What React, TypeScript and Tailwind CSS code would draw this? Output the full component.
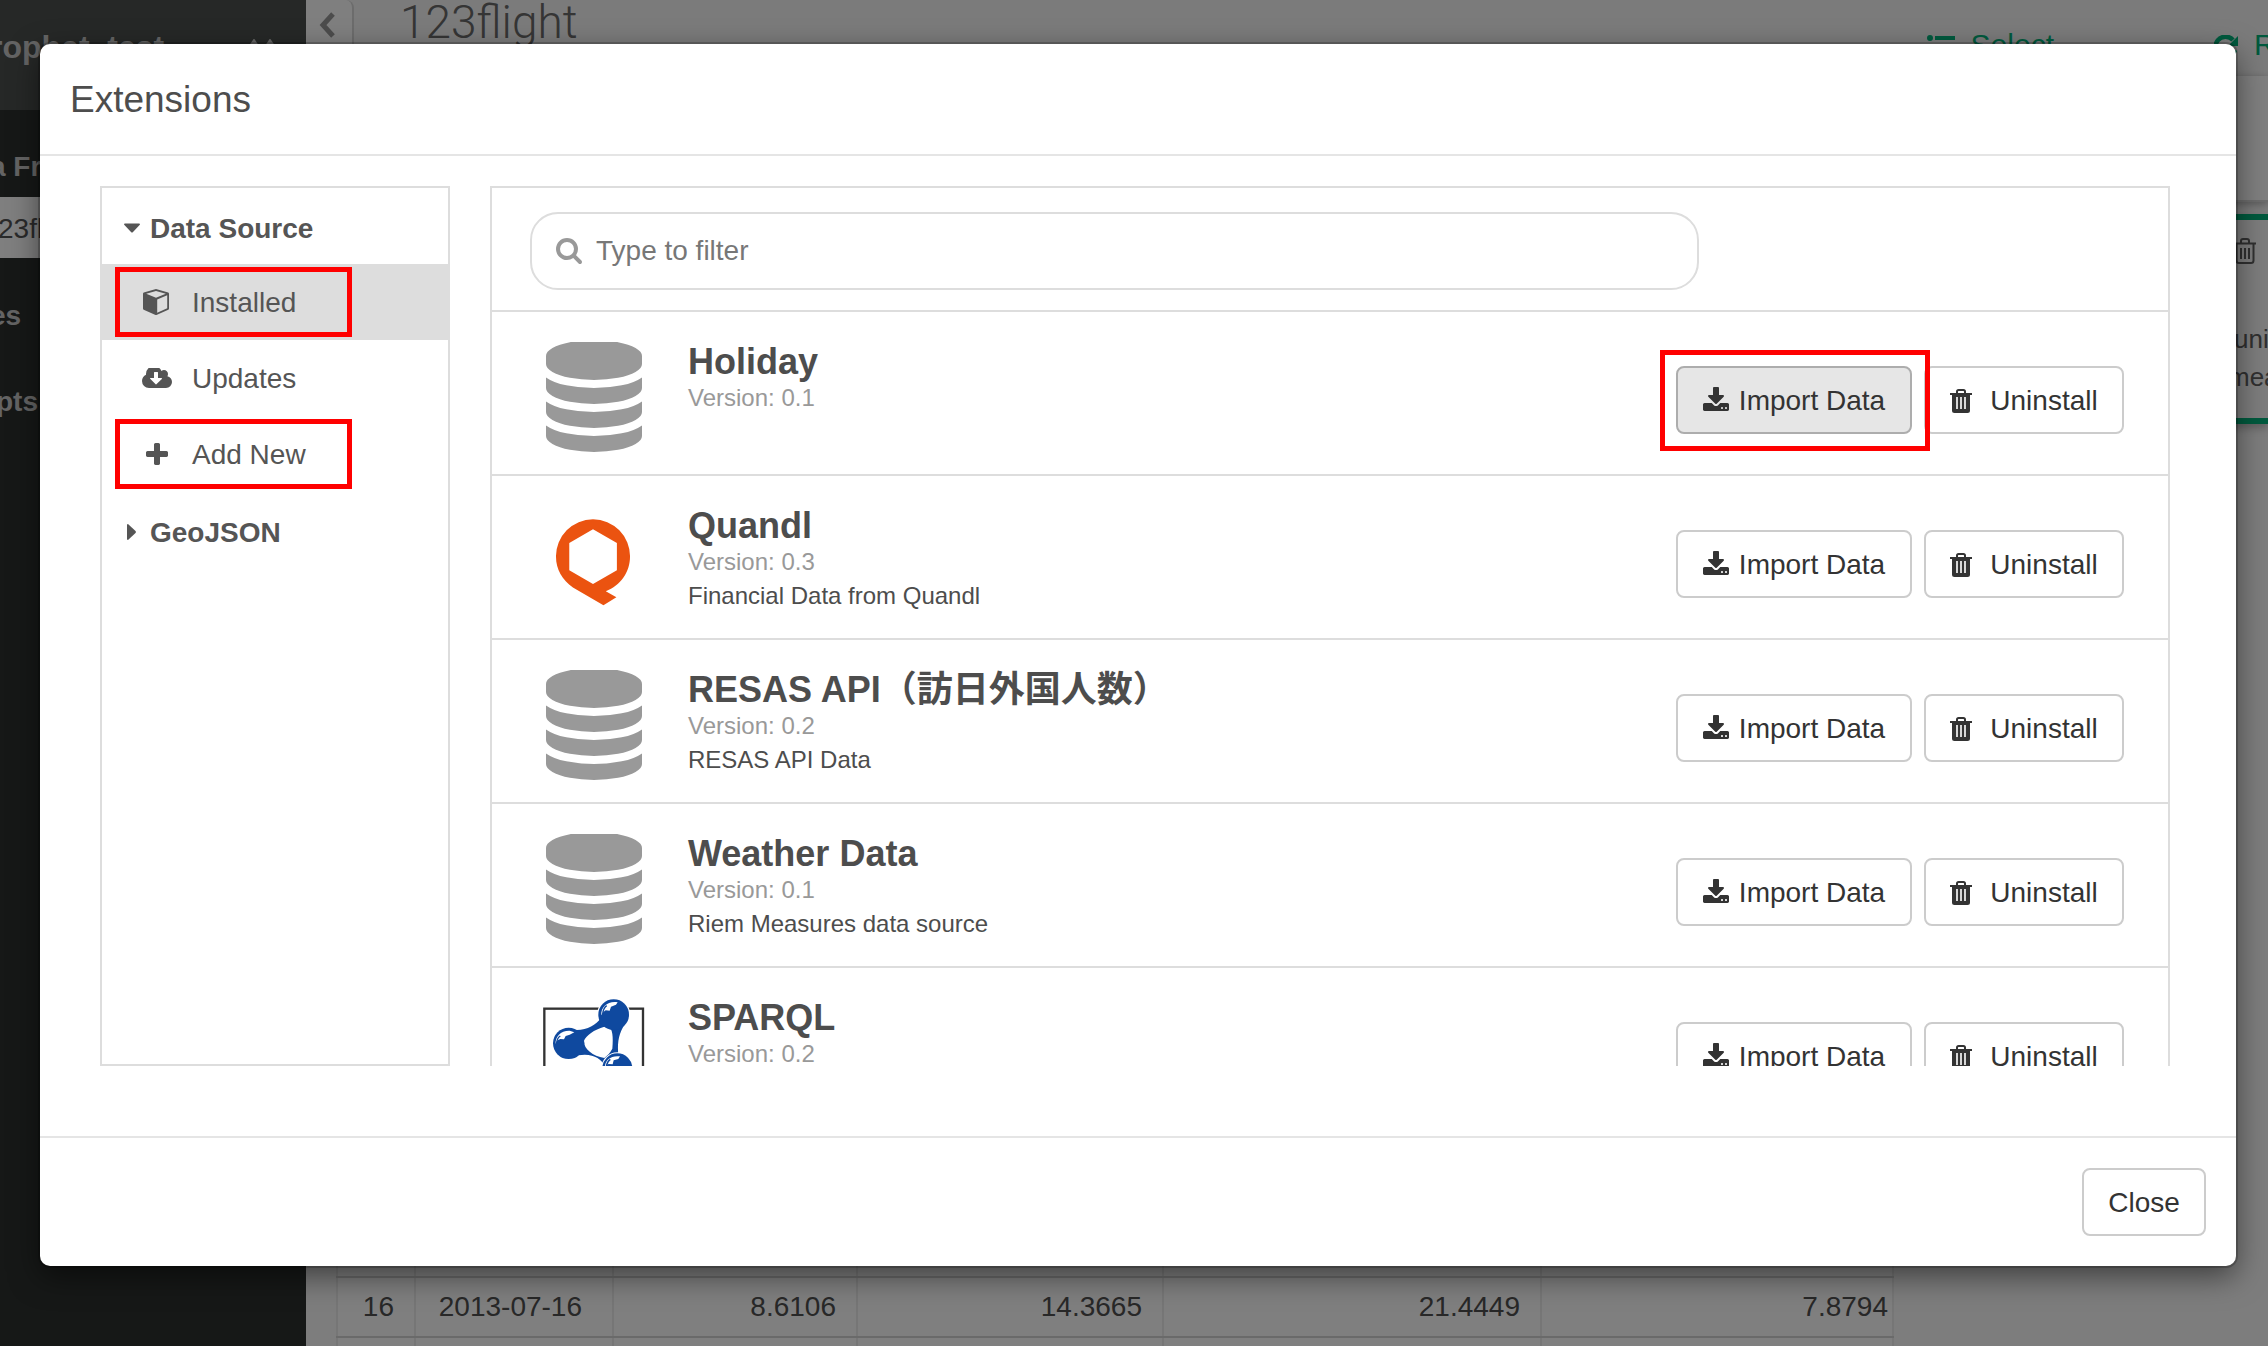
import React from "react";

const FA = {
  download:
    "M1344 1344q0-26-19-45t-45-19-45 19-19 45 19 45 45 19 45-19 19-45zm256 0q0-26-19-45t-45-19-45 19-19 45 19 45 45 19 45-19 19-45zm128-224v320q0 40-28 68t-68 28h-1472q-40 0-68-28t-28-68v-320q0-40 28-68t68-28h465l135 136q58 56 136 56t136-56l136-136h464q40 0 68 28t28 68zm-325-569q17 41-14 70l-448 448q-18 19-45 19t-45-19l-448-448q-31-29-14-70 17-39 59-39h256v-448q0-26 19-45t45-19h256q26 0 45 19t19 45v448h256q42 0 59 39z",
  database:
    "M896 768q237 0 443-43t325-127v170q0 69-103 128t-280 93.5-385 34.5-385-34.5-280-93.5-103-128v-170q119 84 325 127t443 43zm0 768q237 0 443-43t325-127v170q0 69-103 128t-280 93.5-385 34.5-385-34.5-280-93.5-103-128v-170q119 84 325 127t443 43zm0-384q237 0 443-43t325-127v170q0 69-103 128t-280 93.5-385 34.5-385-34.5-280-93.5-103-128v-170q119 84 325 127t443 43zm0-1152q208 0 385 34.5t280 93.5 103 128v128q0 69-103 128t-280 93.5-385 34.5-385-34.5-280-93.5-103-128v-128q0-69 103-128t280-93.5 385-34.5z",
  search:
    "M1216 832q0-185-131.5-316.5t-316.5-131.5-316.5 131.5-131.5 316.5 131.5 316.5 316.5 131.5 316.5-131.5 131.5-316.5zm512 832q0 52-38 90t-90 38q-54 0-90-38l-343-342q-179 124-399 124-143 0-273.5-55.5t-225-150-150-225-55.5-273.5 55.5-273.5 150-225 225-150 273.5-55.5 273.5 55.5 225 150 150 225 55.5 273.5q0 220-124 399l343 343q37 37 37 90z",
  cloud:
    "M1280 928q0-14-9-23t-23-9h-224v-352q0-13-9.5-22.5t-22.5-9.5h-192q-13 0-22.5 9.5t-9.5 22.5v352h-224q-13 0-22.5 9.5t-9.5 22.5q0 14 9 23l352 352q9 9 23 9t23-9l351-351q10-12 10-24zm640 224q0 159-112.5 271.5t-271.5 112.5h-1088q-185 0-316.5-131.5t-131.5-316.5q0-130 70-240t188-165q-2-30-2-43 0-212 150-362t362-150q156 0 285.5 87t188.5 231q71-62 166-62 106 0 181 75t75 181q0 76-41 138 130 31 213.5 135.5t83.5 238.5z",
  plus: "M1600 736v192q0 40-28 68t-68 28h-416v416q0 40-28 68t-68 28h-192q-40 0-68-28t-28-68v-416h-416q-40 0-68-28t-28-68v-192q0-40 28-68t68-28h416v-416q0-40 28-68t68-28h192q40 0 68 28t28 68v416h416q40 0 68 28t28 68z",
};

function CubeIcon() {
  return (
    <svg viewBox="0 0 26 26" className="mr-0.5 h-[26px] w-[26px]" fill="currentColor" aria-hidden="true">
      <path
        fillRule="evenodd"
        d="M13 0 25.2 3.6Q26 4 26 4.8V19.6Q26 20.4 25.3 20.8L14 25.8Q13 26.2 12 25.8L.7 20.8Q0 20.4 0 19.6V4.8Q0 4 .8 3.6ZM13 2 3.2 4.8 13 8.8 22.8 4.8ZM24.2 6.2 14.2 10.4V23.8L24.2 19.3Z"
      />
    </svg>
  );
}

function TrashIcon() {
  return (
    <svg viewBox="0 0 22 24" className="h-6 w-[22px]" fill="none" aria-hidden="true">
      <path d="M7 4V2.6Q7 1 8.6 1H13.4Q15 1 15 2.6V4" stroke="currentColor" strokeWidth="2" />
      <path d="M0 4H22V6H20V21.5Q20 24 17.5 24H4.500Q2 24 2 21.500V6H0Z" fill="currentColor" />
      <path d="M7 8V20M11 8V20M15 8V20" stroke="#fff" strokeWidth="1.600" />
    </svg>
  );
}

function QuandlLogo() {
  return (
    <svg viewBox="107 57 223 260" className="mr-0.5 h-[87px] w-[74px]" aria-hidden="true">
      <path
        fill="#eb5310"
        fillRule="evenodd"
        d="M218.500 57A111.500 111.500 0 0 1 330 170C330 215 302 257 257 274L289 292 250 316 158 262C126 240 107 208 107 170A111.500 111.500 0 0 1 218.500 57ZM218.500 87 147 128V210L218.500 252 290.500 210V128Z"
      />
    </svg>
  );
}

function SparqlLogo() {
  return (
    <svg viewBox="24 27 306 336" className="h-28 w-[102px]" aria-hidden="true">
      <rect x="28" y="56" width="296" height="296" fill="#fff" stroke="#333" strokeWidth="7" />
      <circle cx="236" cy="74" r="46" fill="#fff" stroke="#fff" strokeWidth="8" />
      <path
        fill="#0f499f"
        fillRule="evenodd"
        d="M120 120C155 122 182 105 198 84L276 92C252 125 246 155 250 196L275 215 215 235C202 210 178 188 130 196ZM208 110C178 118 152 138 147 152C145 175 172 198 208 204C218 196 226 188 232 176C234 152 234 130 228 118Q220 108 208 110Z"
      />
      <g fill="#0f499f">
        <circle cx="236" cy="74" r="46" />
        <circle cx="101" cy="160" r="47" />
      </g>
      <circle cx="247" cy="235" r="48" fill="#fff" />
      <circle cx="247" cy="235" r="45" fill="#0f499f" />
      <g fill="#fff">
        <path d="M199 76C197 50 220 32 248 37L243 44 228 50 224 62 212 61Q202 66 199 76Z" />
        <path d="M62 162C60 140 78 121 104 122L118 127 104 134 92 138 87 148 76 147Q64 150 62 162Z" />
        <path d="M210 235C208 213 225 195 255 199L250 207 236 211 233 223 221 222Q212 225 210 235Z" />
      </g>
      <path d="M65 160Q66 144 76 138M203 72Q205 54 215 47M214 231Q215 215 226 208" stroke="#0f499f" strokeWidth="4" fill="none" />
    </svg>
  );
}

function DatabaseLogo() {
  return (
    <svg viewBox="128 32 1536 1760" className="h-[110px] w-24 fill-[#999]" aria-hidden="true">
      <path d={FA.database} />
    </svg>
  );
}

const button =
  "flex h-[68px] items-center justify-center rounded-lg border-2 pt-0.5 text-[28px] leading-10 text-[#333]";

type Extension = {
  name: string;
  version: string;
  description?: string;
  logo: "database" | "quandl" | "sparql";
  active?: boolean;
};

const extensions: Extension[] = [
  { name: "Holiday", version: "0.1", logo: "database", active: true },
  { name: "Quandl", version: "0.3", description: "Financial Data from Quandl", logo: "quandl" },
  { name: "RESAS API（訪日外国人数）", version: "0.2", description: "RESAS API Data", logo: "database" },
  { name: "Weather Data", version: "0.1", description: "Riem Measures data source", logo: "database" },
  { name: "SPARQL", version: "0.2", logo: "sparql" },
];

function ExtensionRow({ item }: { item: Extension }) {
  return (
    <li className="flex h-[164px] shrink-0 items-start border-b-2 border-[#ddd] pr-11 pl-[52px]">
      <div className="mr-11 flex h-[162px] w-[100px] shrink-0 justify-center">
        {item.logo === "database" && <div className="pt-[30px]"><DatabaseLogo /></div>}
        {item.logo === "quandl" && <div className="pt-[43px]"><QuandlLogo /></div>}
        {item.logo === "sparql" && <div className="pt-[31px]"><SparqlLogo /></div>}
      </div>
      <div className="flex-1 pt-[29px] text-2xl leading-[34px] text-[#4d4d4d]">
        <h3 className="h-10 text-4xl leading-[42px] font-bold">{item.name}</h3>
        <p className="text-[#999]">Version: {item.version}</p>
        {item.description && <p>{item.description}</p>}
      </div>
      <div className="flex gap-3 pt-[54px]">
        <div className="relative">
          <button
            type="button"
            className={`${button} w-[236px] gap-2.5 ${item.active ? "border-[#adadad] bg-[#e6e6e6]" : "border-[#ccc] bg-white"}`}
          >
            <svg viewBox="64 0 1664 1536" className="mb-1 h-6 w-[26px] fill-current" aria-hidden="true">
              <path d={FA.download} />
            </svg>
            Import Data
          </button>
          {item.active && (
            <span className="pointer-events-none absolute -top-4 -right-[18px] -bottom-[17px] -left-4 z-10 border-5 border-[#ff0000]" />
          )}
        </div>
        <button type="button" className={`${button} w-[200px] gap-[18px] border-[#ccc] bg-white`}>
          <TrashIcon />
          Uninstall
        </button>
      </div>
    </li>
  );
}

function SideItem({
  icon,
  label,
  selected,
  marked,
}: {
  icon: React.ReactNode;
  label: string;
  selected?: boolean;
  marked?: boolean;
}) {
  return (
    <li className="relative">
      <button
        type="button"
        className={`flex h-[76px] w-full items-center gap-5 pl-10 text-left ${selected ? "bg-[#ddd]" : ""}`}
      >
        <span className="flex w-[30px] justify-center">{icon}</span>
        <span className="pt-0.5">{label}</span>
      </button>
      {marked && (
        <span className="pointer-events-none absolute top-[3px] left-[13px] h-[70px] w-[237px] border-5 border-[#ff0000]" />
      )}
    </li>
  );
}

function SideHeading({ label, open }: { label: string; open?: boolean }) {
  return (
    <button
      type="button"
      aria-expanded={!!open}
      className="flex h-[76px] w-full items-center gap-2.5 pt-1 pl-[22px] text-left font-bold"
    >
      <svg viewBox="0 0 16 16" className="h-4 w-4 fill-current" aria-hidden="true">
        {open ? <path d="M0 4.500Q0 3.500 1 3.500H15Q16 3.500 16 4.500L9 12Q8 13 7 12Z" /> : <path d="M3 1Q3 0 4 0L11.500 7Q12.500 8 11.500 9L4 16Q3 16 3 15Z" />}
      </svg>
      <span className="pt-0.5">{label}</span>
    </button>
  );
}

function Dialog() {
  return (
    <div className="absolute inset-0 bg-black/50 pt-11 pr-8 pb-20 pl-10">
      <section
        role="dialog"
        aria-label="Extensions"
        className="flex h-full flex-col rounded-[10px] bg-white shadow-[0_10px_30px_rgba(0,0,0,0.5)] ring-2 ring-black/20"
      >
        <header className="border-b-2 border-[#e5e5e5] px-[30px] pt-9 pb-[34px]">
          <h2 className="text-[37px] leading-10 text-[#4d4d4d]">Extensions</h2>
        </header>
        <div className="flex min-h-0 flex-1 gap-10 pt-[30px] pr-[66px] pb-[70px] pl-[60px]">
          <nav className="w-[350px] shrink-0 border-2 border-[#ddd] text-[28px] leading-10 text-[#555]">
            <SideHeading label="Data Source" open />
            <ul>
              <SideItem icon={<CubeIcon />} label="Installed" selected marked />
              <SideItem
                icon={
                  <svg viewBox="0 256 1920 1280" className="h-5 w-[30px] fill-current" aria-hidden="true">
                    <path d={FA.cloud} />
                  </svg>
                }
                label="Updates"
              />
              <SideItem
                icon={
                  <svg viewBox="192 128 1408 1408" className="h-[22px] w-[22px] fill-current" aria-hidden="true">
                    <path d={FA.plus} />
                  </svg>
                }
                label="Add New"
                marked
              />
            </ul>
            <SideHeading label="GeoJSON" />
          </nav>
          <div className="min-w-0 flex-1 overflow-hidden border-x-2 border-t-2 border-[#ddd]">
            <div className="border-b-2 border-[#ddd] pt-6 pr-9 pb-5 pl-[38px]">
              <label className="flex h-[78px] w-[73%] items-center gap-3.5 rounded-[28px] border-2 border-[#ddd] px-6">
                <svg viewBox="64 128 1664 1664" className="h-[26px] w-[26px] shrink-0 fill-[#999]" aria-hidden="true">
                  <path d={FA.search} />
                </svg>
                <input
                  type="text"
                  aria-label="Filter"
                  placeholder="Type to filter"
                  className="h-10 min-w-0 flex-1 text-[28px] leading-10 outline-none placeholder:text-[#777]"
                />
              </label>
            </div>
            <ul>
              {extensions.map((item) => (
                <ExtensionRow key={item.name} item={item} />
              ))}
            </ul>
          </div>
        </div>
        <footer className="flex justify-end border-t-2 border-[#e5e5e5] p-[30px]">
          <button type="button" className={`${button} w-[124px] border-[#ccc] bg-white`}>
            Close
          </button>
        </footer>
      </section>
    </div>
  );
}

function Sidebar() {
  return (
    <aside className="w-[306px] shrink-0 overflow-hidden bg-[#2c302e] text-[28px] leading-10 font-bold text-[#c8c8c8]">
      <div className="flex h-[110px] justify-between bg-[#4c504e] pt-[27px] pr-8">
        <span className="-ml-2.5 text-[32px]">rophet_test</span>
        <svg viewBox="0 0 24 24" className="mt-3 h-6 w-6" fill="none" stroke="currentColor" strokeWidth="3" aria-hidden="true">
          <path d="M0 8 4 2 8 8M16 8 20 2 24 8" />
        </svg>
      </div>
      <p className="-ml-2.5 pt-[37px]">a Fr</p>
      <p className="mt-2.5 h-[61px] bg-[#ffffff] pt-3 font-normal text-[#555]">
        <span className="-ml-0.5">23fl</span>
      </p>
      <p className="-ml-2.5 pt-[38px]">es</p>
      <p className="-ml-1 pt-[46px]">pts</p>
    </aside>
  );
}

const line = "border-2 border-[#d4d4d4]";
const cell = "border-x-2 border-x-[#ececec] border-y-2 border-y-[#d4d4d4] text-right";

function DataTable() {
  return (
    <table className={`w-[1558px] table-fixed border-collapse bg-white text-[28px] text-[#505050] ${line}`}>
      <colgroup>
        <col className="w-[78px]" />
        <col className="w-[198px]" />
        <col className="w-[244px]" />
        <col className="w-[306px]" />
        <col className="w-[378px]" />
        <col />
      </colgroup>
      <tbody>
        <tr className="h-[60px]">
          {[0, 1, 2, 3, 4, 5].map((i) => (
            <td key={i} className={cell} />
          ))}
        </tr>
        <tr className="h-[60px]">
          <td className={`${cell} pr-5`}>16</td>
          <td className={`${cell} pr-[30px]`}>2013-07-16</td>
          <td className={`${cell} pr-5`}>8.6106</td>
          <td className={`${cell} pr-5`}>14.3665</td>
          <td className={`${cell} pr-5`}>21.4449</td>
          <td className={`${cell} pr-1`}>7.8794</td>
        </tr>
        <tr className="h-[60px]">
          {[0, 1, 2, 3, 4, 5].map((i) => (
            <td key={i} className={cell} />
          ))}
        </tr>
      </tbody>
    </table>
  );
}

export default function App() {
  return (
    <div className="relative flex h-screen overflow-hidden bg-[#fafafa] font-['Liberation_Sans','Noto_Sans_CJK_JP',sans-serif]">
      <Sidebar />
      <main className="flex min-w-0 flex-1 flex-col">
        <header className="flex h-[76px] shrink-0 items-start bg-[#f7f7f7]">
          <button type="button" aria-label="Collapse" className="flex h-[76px] w-12 items-start justify-center rounded-tr-lg border-r-2 border-[#d8d8d8] bg-[#ffffff] pt-3 pr-1">
            <svg viewBox="0 0 16 26" className="h-[26px] w-4" fill="none" stroke="#999" strokeWidth="5" aria-hidden="true">
              <path d="M14 2 4 13 14 24" />
            </svg>
          </button>
          <h1 className="ml-[46px] flex-1 pt-0.5 font-['Roboto'] text-[46px] leading-10 font-light text-[#6a6a6a]">123flight</h1>
          <div className="flex shrink-0 items-start pt-[25px] text-[30px] leading-10 text-[#00b47c]">
            <svg viewBox="0 0 28 24" className="mt-2.5 h-6 w-7 fill-current" aria-hidden="true">
              <path d="M0 3a3 3 0 1 1 6 0 3 3 0 0 1-6 0M0 12a3 3 0 1 1 6 0 3 3 0 0 1-6 0M8 1H28V5H8ZM8 10H28V14H8Z" />
            </svg>
            <span className="ml-4">Select</span>
            <svg viewBox="0 0 24 24" className="mt-2.5 ml-[160px] h-6 w-6" fill="none" aria-hidden="true">
              <path d="M21 15A10 10 0 1 1 19 5" stroke="currentColor" strokeWidth="4.500" />
              <path d="M24 1V11H14Z" fill="currentColor" />
            </svg>
            <span className="ml-4 w-3.5 overflow-hidden">R</span>
          </div>
        </header>
        <div className="h-[126px] shrink-0 border-b-2 border-[#d8d8d8] bg-[#ffffff] shadow-[0_2px_8px_rgba(0,0,0,0.3)]" />
        <div className="flex min-h-0 flex-1 justify-between">
          <div className="-mb-[52px] flex flex-col justify-end pl-[30px]">
            <DataTable />
          </div>
          <aside className="flex flex-col items-end pt-3">
            <div className="flex h-[210px] w-20 flex-col border-y-6 border-[#00b47c] text-[26px] text-[#606060] shadow-[0_4px_8px_rgba(0,0,0,0.25)]">
              <svg viewBox="0 0 22 26" className="mt-[18px] ml-[46px] h-[26px] w-[22px] shrink-0" fill="none" stroke="currentColor" strokeWidth="2" aria-hidden="true">
                <path d="M0 5.500H22M7 5V3Q7 1 9 1H13Q15 1 15 3V5M2.500 6V22.500Q2.500 25 5 25H17Q19.500 25 19.500 22.500V6M7 10V21M11 10V21M15 10V21" />
              </svg>
              <p className="mt-14 w-20 overflow-hidden pl-[46px] leading-[38px]">uni</p>
              <p className="w-20 overflow-hidden pl-[40px] leading-[38px]">mea</p>
            </div>
          </aside>
        </div>
      </main>
      <Dialog />
    </div>
  );
}
